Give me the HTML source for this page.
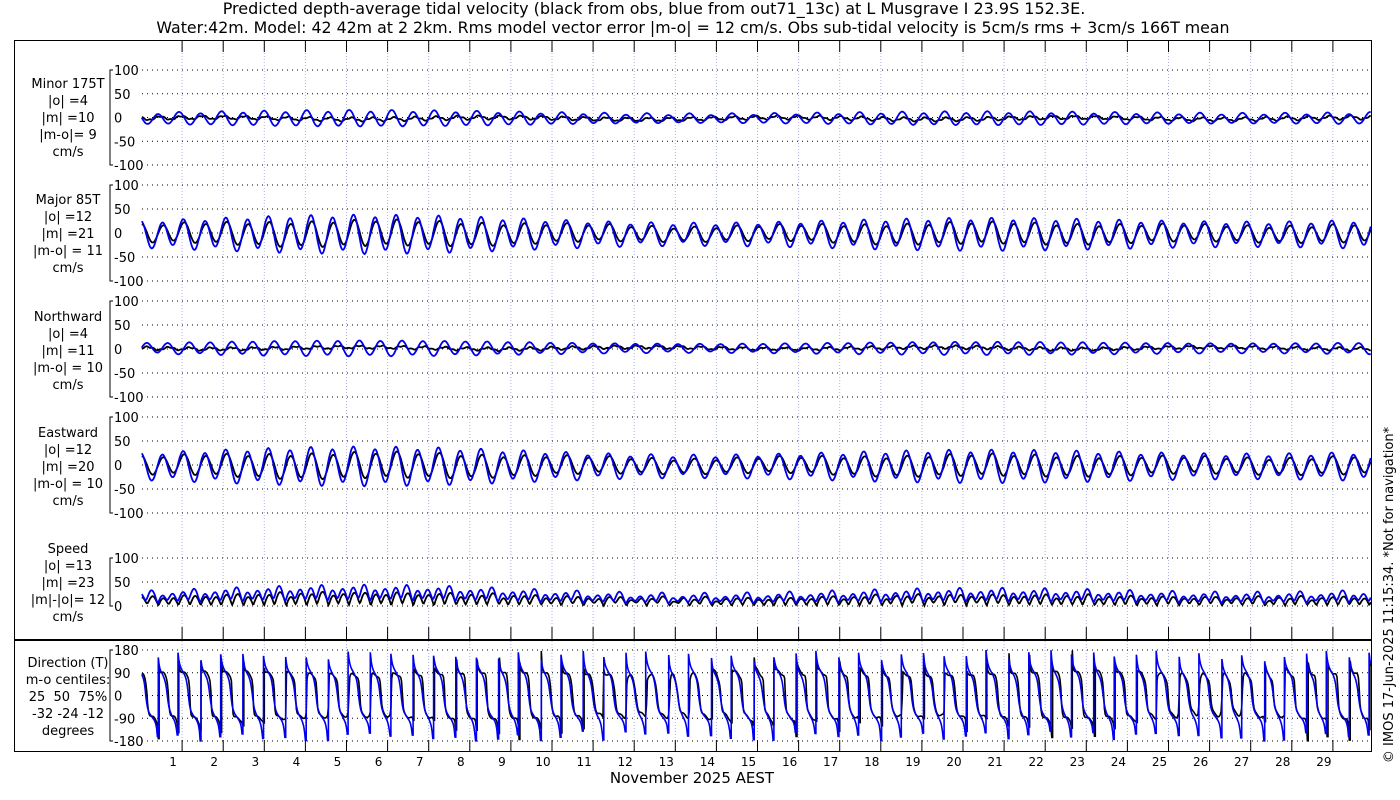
<!DOCTYPE html>
<html><head><meta charset="utf-8"><style>
html,body{margin:0;padding:0;background:#fff;width:1400px;height:800px;overflow:hidden}
svg{display:block;font-family:"DejaVu Sans","Liberation Sans",sans-serif}
</style></head><body>
<svg id="s" width="1400" height="800" xmlns="http://www.w3.org/2000/svg">
<text x="654" y="14" font-size="16" text-anchor="middle">Predicted depth-average tidal velocity (black from obs, blue from out71_13c) at L Musgrave I 23.9S 152.3E.</text>
<text x="693" y="33" font-size="15.8" text-anchor="middle">Water:42m. Model: 42 42m at 2 2km. Rms model vector error |m-o| = 12 cm/s. Obs sub-tidal velocity is 5cm/s rms + 3cm/s 166T mean</text>
<rect x="14.5" y="40.5" width="1357" height="711" fill="none" stroke="#000" stroke-width="1"/>
<line x1="14" y1="640" x2="1372" y2="640" stroke="#000" stroke-width="2"/>
<text transform="translate(1393,595) rotate(-90)" font-size="13" text-anchor="middle">© IMOS 17-Jun-2025 11:15:34. *Not for navigation*</text>
<text x="692" y="783" font-size="15" text-anchor="middle">November 2025 AEST</text>
<g id="g"></g>
</svg>
<script>
var g=document.getElementById('g'),h='';
var X0=141,DX=41.1,XE=1371;
function T(x,y,s,sz,a){h+='<text x="'+x+'" y="'+y+'" font-size="'+(sz||13)+'" text-anchor="'+(a||'middle')+'">'+s+'</text>';}
for(var d=1;d<=29;d++){var x=X0+DX*d;
 if(x<XE){h+='<line x1="'+x+'" y1="41" x2="'+x+'" y2="751" stroke="#aab4e6" stroke-width="1" stroke-dasharray="1,2"/>';
 h+='<line x1="'+x+'" y1="41" x2="'+x+'" y2="52" stroke="#000"/><line x1="'+x+'" y1="627" x2="'+x+'" y2="640" stroke="#000"/><line x1="'+x+'" y1="740" x2="'+x+'" y2="751" stroke="#000"/>';}
 T(X0+DX*d-9,766,d,12);}
var panels=[
 {top:70,bot:165,lo:-100,hi:100,ticks:[100,50,0,-50,-100],lab:['Minor 175T','|o| =4','|m| =10','|m-o|= 9','cm/s'],ly:88},
 {top:185,bot:281,lo:-100,hi:100,ticks:[100,50,0,-50,-100],lab:['Major 85T','|o| =12','|m| =21','|m-o| = 11','cm/s'],ly:204},
 {top:301,bot:397,lo:-100,hi:100,ticks:[100,50,0,-50,-100],lab:['Northward','|o| =4','|m| =11','|m-o| = 10','cm/s'],ly:321},
 {top:417,bot:513,lo:-100,hi:100,ticks:[100,50,0,-50,-100],lab:['Eastward','|o| =12','|m| =20','|m-o| = 10','cm/s'],ly:437},
 {top:558,bot:606,lo:0,hi:100,ticks:[100,50,0],lab:['Speed','|o| =13','|m| =23','|m|-|o|= 12','cm/s'],ly:553},
 {top:650,bot:741,lo:-180,hi:180,ticks:[180,90,0,-90,-180],lab:['Direction (T)','m-o centiles:','25&#160;&#160;50&#160;&#160;75%','-32 -24 -12','degrees'],ly:667}
];
panels.forEach(function(p){
 function Y(v){return p.bot-(v-p.lo)/(p.hi-p.lo)*(p.bot-p.top);}
 p.Y=Y;
 h+='<path d="M113,'+p.top+'H110V'+p.bot+'H113" fill="none" stroke="#000"/>';
 p.ticks.forEach(function(t){var y=Y(t);
  h+='<line x1="142" y1="'+y+'" x2="1371" y2="'+y+'" stroke="#000" stroke-dasharray="1,4"/>';
  T(114,y+5,t,13,'start');});
 p.lab.forEach(function(s,i){T(68,p.ly+i*17,s,13);});
});
var w=2*Math.PI/0.5175,s85=Math.sin(85*Math.PI/180),c85=Math.cos(85*Math.PI/180),s175=Math.sin(175*Math.PI/180),c175=Math.cos(175*Math.PI/180);
var pts={m:[[],[],[],[],[],[]],o:[[],[],[],[],[],[]]};
for(var t=0.02;t<=29.95;t+=0.02){
 var env=1+0.22*Math.cos(2*Math.PI*(t-5.5)/14.77)+0.12*Math.cos(2*Math.PI*(t-5)/27.5);
 var dj=Math.cos(w/2*t+1.0);
 var majm=28*env*Math.cos(w*t)+5*dj-2;
 var minm=12*env*Math.cos(w*t+1.3)+2*dj-2;
 var majo=19*env*Math.cos(w*t-0.25)+3*Math.cos(w/2*t+0.6)+2*Math.sin(t*1.3)-1;
 var mino=3.5*Math.cos(w*t+0.7)-2+2*Math.sin(t*0.9)+1.2*Math.sin(t*37);
 [[majm,minm,'m'],[majo,mino,'o']].forEach(function(q){
  var E=q[0]*s85+q[1]*s175,N=q[0]*c85+q[1]*c175,sp=Math.sqrt(E*E+N*N),dir=Math.atan2(E,N)*180/Math.PI;
  var v=[q[1],q[0],N,E,sp,dir],x=X0+DX*t;
  if(x>XE)return;
  for(var k=0;k<6;k++)pts[q[2]][k].push([x,panels[k].Y(v[k])]);
 });
}
['o','m'].forEach(function(key){
 for(var k=0;k<6;k++){var a=pts[key][k],d='M';
  for(var i=0;i<a.length;i++){
   if(k==5&&i>0&&Math.abs(a[i][1]-a[i-1][1])>50)d+=(a[i][0].toFixed(1)+','+a[i-1][1].toFixed(1)+' ');
   d+=a[i][0].toFixed(1)+','+a[i][1].toFixed(1)+' ';}
  h+='<path d="'+d+'" fill="none" stroke="'+(key=='m'?'#0000ee':'#000')+'" stroke-width="'+(k==5?1.6:1.8)+'"/>';}
});
g.innerHTML=h;
</script>
</body></html>
